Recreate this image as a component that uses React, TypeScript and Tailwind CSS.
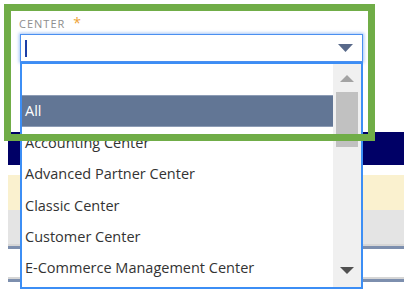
import React from 'react';

const options = [
  'Accounting Center',
  'Advanced Partner Center',
  'Classic Center',
  'Customer Center',
  'E-Commerce Management Center',
];

export default function App() {
  return (
    <div
      className="relative w-[420px] h-[293px] overflow-hidden bg-white"
      style={{ fontFamily: '"Open Sans", "Liberation Sans", sans-serif' }}
    >
      {/* page behind the open dropdown */}
      <div className="w-[396px] ml-[8px] pt-[132px] flex flex-col">
        <div className="h-[33px] bg-[#000066]" />
        <div className="h-[10px] bg-white" />
        <div className="h-[35px] bg-[#faf1cf]" />
        <div className="h-[34px] bg-[#e4e4e4]" />
        <div className="h-[2px] bg-[#d6d6d6]" />
        <div className="h-[3px] bg-[#7d8fae]" />
        <div className="h-[28px] bg-white" />
        <div className="h-[2px] bg-[#d6d6d6]" />
        <div className="h-[3px] bg-[#7d8fae]" />
      </div>

      {/* field with open list */}
      <div className="absolute left-[19px] top-[14px] w-[344px]">
        <div className="flex items-start gap-[8px] h-[20px] pt-[2px]">
          <span className="text-[11px] leading-[16px] tracking-[1px] text-[#8e8e8e]">CENTER</span>
          <span className="text-[14px] leading-[14px] text-[#eea236]">*</span>
        </div>
        <div className="ml-[1px] h-[28px] border border-[#4a8ff0] shadow-[0_0_3px_1px_rgba(90,150,240,0.55)] bg-white flex items-center justify-between pl-[4px] pr-[9px]">
          <div className="w-[2px] h-[17px] bg-[#1d3fa6]" />
          <svg width="15" height="8" viewBox="0 0 15 8">
            <path d="M0 0 H15 L7.5 8 Z" fill="#58698a" />
          </svg>
        </div>
        <div className="ml-[1px] h-[227px] border-2 border-[#3c8ef5] bg-white flex">
          <div className="flex-1 flex flex-col text-[14.5px] text-[#333333]">
            <div className="h-[31px]" />
            <div className="h-[32px] flex items-center pl-[3px] bg-[#627695] border-y border-[#8d9cb5] text-white">All</div>
            {options.map((o) => (
              <div key={o} className="h-[31.4px] flex items-center pl-[3px] whitespace-nowrap">
                {o}
              </div>
            ))}
          </div>
          <div className="w-[28px] bg-[#f0f0f0] flex flex-col items-center">
            <svg width="14" height="7" viewBox="0 0 14 7" className="mt-[11px]">
              <path d="M0 7 H14 L7 0 Z" fill="#a3a3a3" />
            </svg>
            <div className="mt-[10px] w-[22px] h-[55px] bg-[#c1c1c1]" />
            <svg width="14" height="7" viewBox="0 0 14 7" className="mt-[120px]">
              <path d="M0 0 H14 L7 7 Z" fill="#505050" />
            </svg>
          </div>
        </div>
      </div>

      {/* annotation frame */}
      <div className="absolute left-[4px] top-[4px] w-[371px] h-[137px] border-[7px] border-[#70ad47] pointer-events-none" />
    </div>
  );
}
